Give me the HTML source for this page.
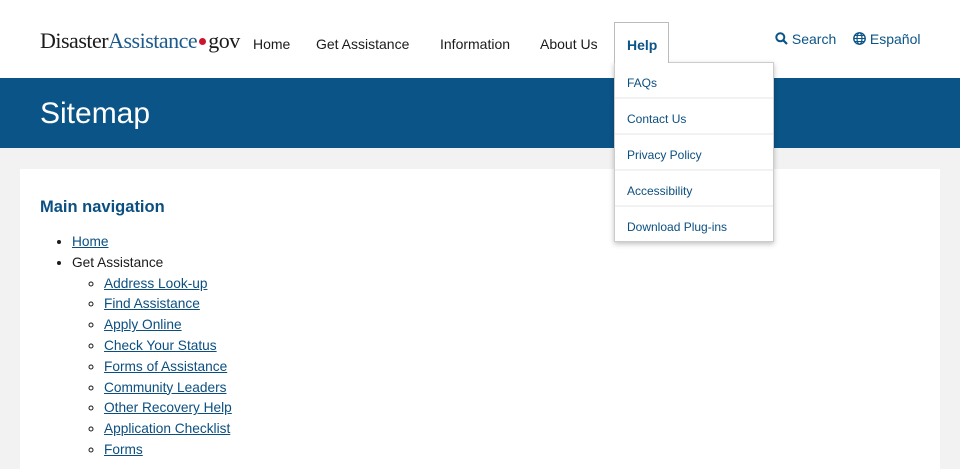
<!DOCTYPE html>
<html><head><meta charset="utf-8"><style>
*{margin:0;padding:0;box-sizing:border-box}
body{width:960px;height:460px;overflow:hidden;background:#f2f2f2;font-family:"Liberation Sans",Arial,sans-serif;position:relative}
.hdr{position:absolute;left:0;top:0;width:960px;height:78px;background:#fff}
.logo{position:absolute;left:40px;top:28px;font-family:"Liberation Serif",serif;font-size:22px;letter-spacing:-0.5px;color:#1b1b1b;white-space:nowrap}
.logo .a{color:#1d5a8c}
.logo .dot{display:inline-block;width:7px;height:7px;border-radius:50%;background:#c9162c;margin:0 2px 2px 2px;vertical-align:middle}
.nav{position:absolute;top:36px;font-size:14px;color:#1b1b1b}
.help{position:absolute;left:614px;top:22px;width:55px;height:41px;border:1px solid #bbb;border-bottom:none;background:#fff;font-weight:bold;color:#0b5487;font-size:14px;padding:14px 0 0 12px;z-index:3}
.dd{position:absolute;left:614px;top:62px;width:160px;height:180px;background:#fff;border:1px solid #ccc;box-shadow:0 2px 5px rgba(0,0,0,.25);z-index:2}
.dd div{height:36px;border-bottom:2px solid #f2f2f2;font-size:12px;color:#0b4f80;padding:13px 0 0 12px}
.dd div:last-child{border-bottom:none}
.tr{position:absolute;top:31px;font-size:14px;color:#0b5487}
.band{position:absolute;left:0;top:78px;width:960px;height:70px;background:#0b5487}
.band h1{position:absolute;left:40px;top:19px;color:#fff;font-weight:normal;font-size:30px}
.card{position:absolute;left:20px;top:169px;width:920px;height:300px;background:#fff}
h2{position:absolute;left:20px;top:29px;font-size:16.5px;color:#0b4f80}
ul{position:absolute;left:52px;top:63px;font-size:13.7px;line-height:20.8px;color:#1b1b1b}
ul ul{position:static;padding-left:32px;list-style:circle}
a{color:#0b4f80;text-decoration:underline}
</style></head><body>
<div class="hdr">
<div class="logo">Disaster<span class="a">Assistance</span><span class="dot"></span>gov</div>
<div class="nav" style="left:253px">Home</div>
<div class="nav" style="left:316px">Get Assistance</div>
<div class="nav" style="left:440px">Information</div>
<div class="nav" style="left:540px">About Us</div>
<div class="tr" style="left:775px"><svg width="13" height="13" viewBox="0 0 13 13" style="vertical-align:-1px"><circle cx="5.3" cy="5.3" r="4" fill="none" stroke="#0b5487" stroke-width="2"/><path d="M8.3 8.3L12 12" stroke="#0b5487" stroke-width="2.2"/></svg> Search</div>
<div class="tr" style="left:853px"><svg width="13" height="13" viewBox="0 0 13 13" style="vertical-align:-1px"><circle cx="6.5" cy="6.5" r="5.7" fill="none" stroke="#0b5487" stroke-width="1.4"/><ellipse cx="6.5" cy="6.5" rx="2.5" ry="5.7" fill="none" stroke="#0b5487" stroke-width="1.2"/><path d="M1 6.5H12M2 3.5H11M2 9.5H11" stroke="#0b5487" stroke-width="1.1"/></svg> Español</div>
</div>
<div class="help">Help</div>
<div class="dd"><div>FAQs</div><div>Contact Us</div><div>Privacy Policy</div><div>Accessibility</div><div>Download Plug-ins</div></div>
<div class="band"><h1>Sitemap</h1></div>
<div class="card">
<h2>Main navigation</h2>
<ul>
<li><a>Home</a></li>
<li>Get Assistance
<ul>
<li><a>Address Look-up</a></li>
<li><a>Find Assistance</a></li>
<li><a>Apply Online</a></li>
<li><a>Check Your Status</a></li>
<li><a>Forms of Assistance</a></li>
<li><a>Community Leaders</a></li>
<li><a>Other Recovery Help</a></li>
<li><a>Application Checklist</a></li>
<li><a>Forms</a></li>
</ul></li>
</ul>
</div>
</body></html>
